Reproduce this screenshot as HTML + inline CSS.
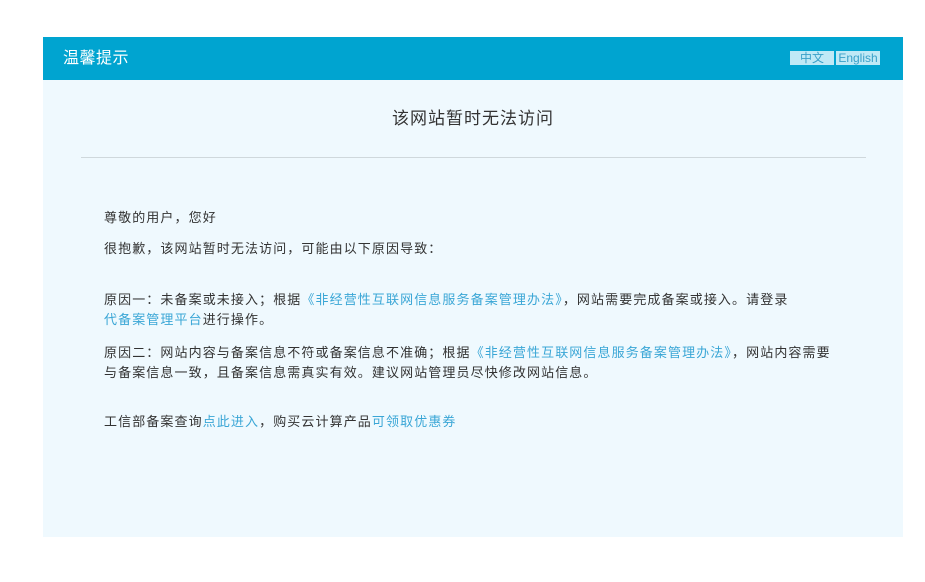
<!DOCTYPE html>
<html><head><meta charset="utf-8"><style>
*{margin:0;padding:0;box-sizing:border-box}
body{width:925px;height:582px;background:#fff;font-family:"Liberation Sans","Noto Sans CJK SC",sans-serif;position:relative;overflow:hidden}
.box{position:absolute;left:43px;top:37px;width:860px;height:500px;background:#eff9fe}
.hd{height:43px;background:#00a4d0;position:relative}
.hd .t{position:absolute;left:20px;top:11px;color:#fff;font-size:16px;line-height:22px;letter-spacing:0.5px}
.lang{position:absolute;left:747px;top:14px;font-size:12px;line-height:14px;display:flex;gap:2px}
.lang span{background:#bfe9f6;color:#3aa0c8;display:block;height:14px}
.l1{width:44px;text-align:center}
.l2{width:44px;text-align:center}
h1{position:absolute;left:0;width:860px;top:70px;text-align:center;font-weight:normal;font-size:17px;color:#333;line-height:24px;letter-spacing:1px}
.hr{position:absolute;left:38px;top:120px;width:785px;height:1px;background:#cfd8dc}
p{position:absolute;left:61px;font-size:13px;color:#333;line-height:20px;white-space:nowrap;letter-spacing:1.1px}
a{color:#3aa6d6;text-decoration:none}
</style></head><body>
<div class="box">
<div class="hd"><div class="t">温馨提示</div>
<div class="lang"><span class="l1">中文</span><span class="l2">English</span></div></div>
<h1>该网站暂时无法访问</h1>
<div class="hr"></div>
<p style="top:171px">尊敬的用户，您好</p>
<p style="top:202px">很抱歉，该网站暂时无法访问，可能由以下原因导致：</p>
<p style="top:253px">原因一：未备案或未接入；根据<a>《非经营性互联网信息服务备案管理办法》</a>，网站需要完成备案或接入。请登录<br><a>代备案管理平台</a>进行操作。</p>
<p style="top:306px">原因二：网站内容与备案信息不符或备案信息不准确；根据<a>《非经营性互联网信息服务备案管理办法》</a>，网站内容需要<br>与备案信息一致，且备案信息需真实有效。建议网站管理员尽快修改网站信息。</p>
<p style="top:375px">工信部备案查询<a>点此进入</a>，购买云计算产品<a>可领取优惠券</a></p>
</div>
</body></html>
